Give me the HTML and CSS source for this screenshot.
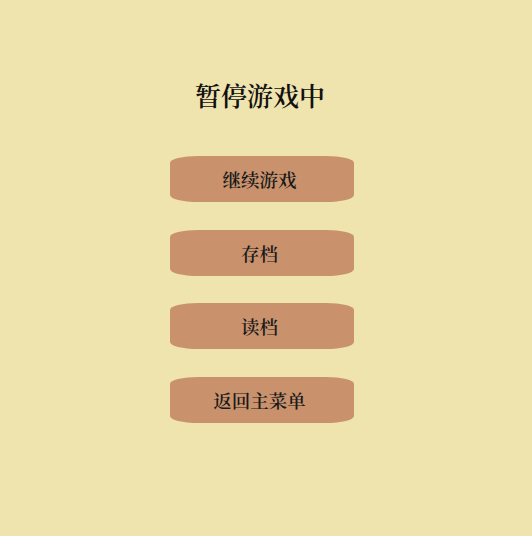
FILE: index.html
```html
<!DOCTYPE html>
<html lang="zh">
<head>
<meta charset="utf-8">
<link rel="stylesheet" href="styles.css">
</head>
<body>
<div class="pause">
  <h1 class="title">暂停游戏中</h1>
  <div class="menu">
    <button class="btn">继续游戏</button>
    <button class="btn">存档</button>
    <button class="btn">读档</button>
    <button class="btn">返回主菜单</button>
  </div>
</div>
</body>
</html>
```
FILE: styles.css
```css
html, body {
  margin: 0;
  padding: 0;
  height: 100%;
}
body {
  background: #efe3ae;
  font-family: "Noto Serif CJK SC", "Noto Sans CJK SC", serif;
}
.pause {
  display: flex;
  flex-direction: column;
  align-items: center;
  padding-top: 78px;
  padding-right: 8px;
}
.title {
  margin: 0 4px 0 0;
  font-size: 26px;
  line-height: 34px;
  font-weight: 600;
  color: #111;
}
.menu {
  display: flex;
  flex-direction: column;
  align-items: center;
  gap: 27.3px;
  margin-top: 44px;
}
.btn {
  width: 184px;
  height: 46.3px;
  border: none;
  border-radius: 28px / 7px;
  background: #c9926d;
  color: #1a1a1a;
  font-family: inherit;
  font-size: 18.5px;
  font-weight: 600;
  padding: 0 5px 0 0;
}
```
